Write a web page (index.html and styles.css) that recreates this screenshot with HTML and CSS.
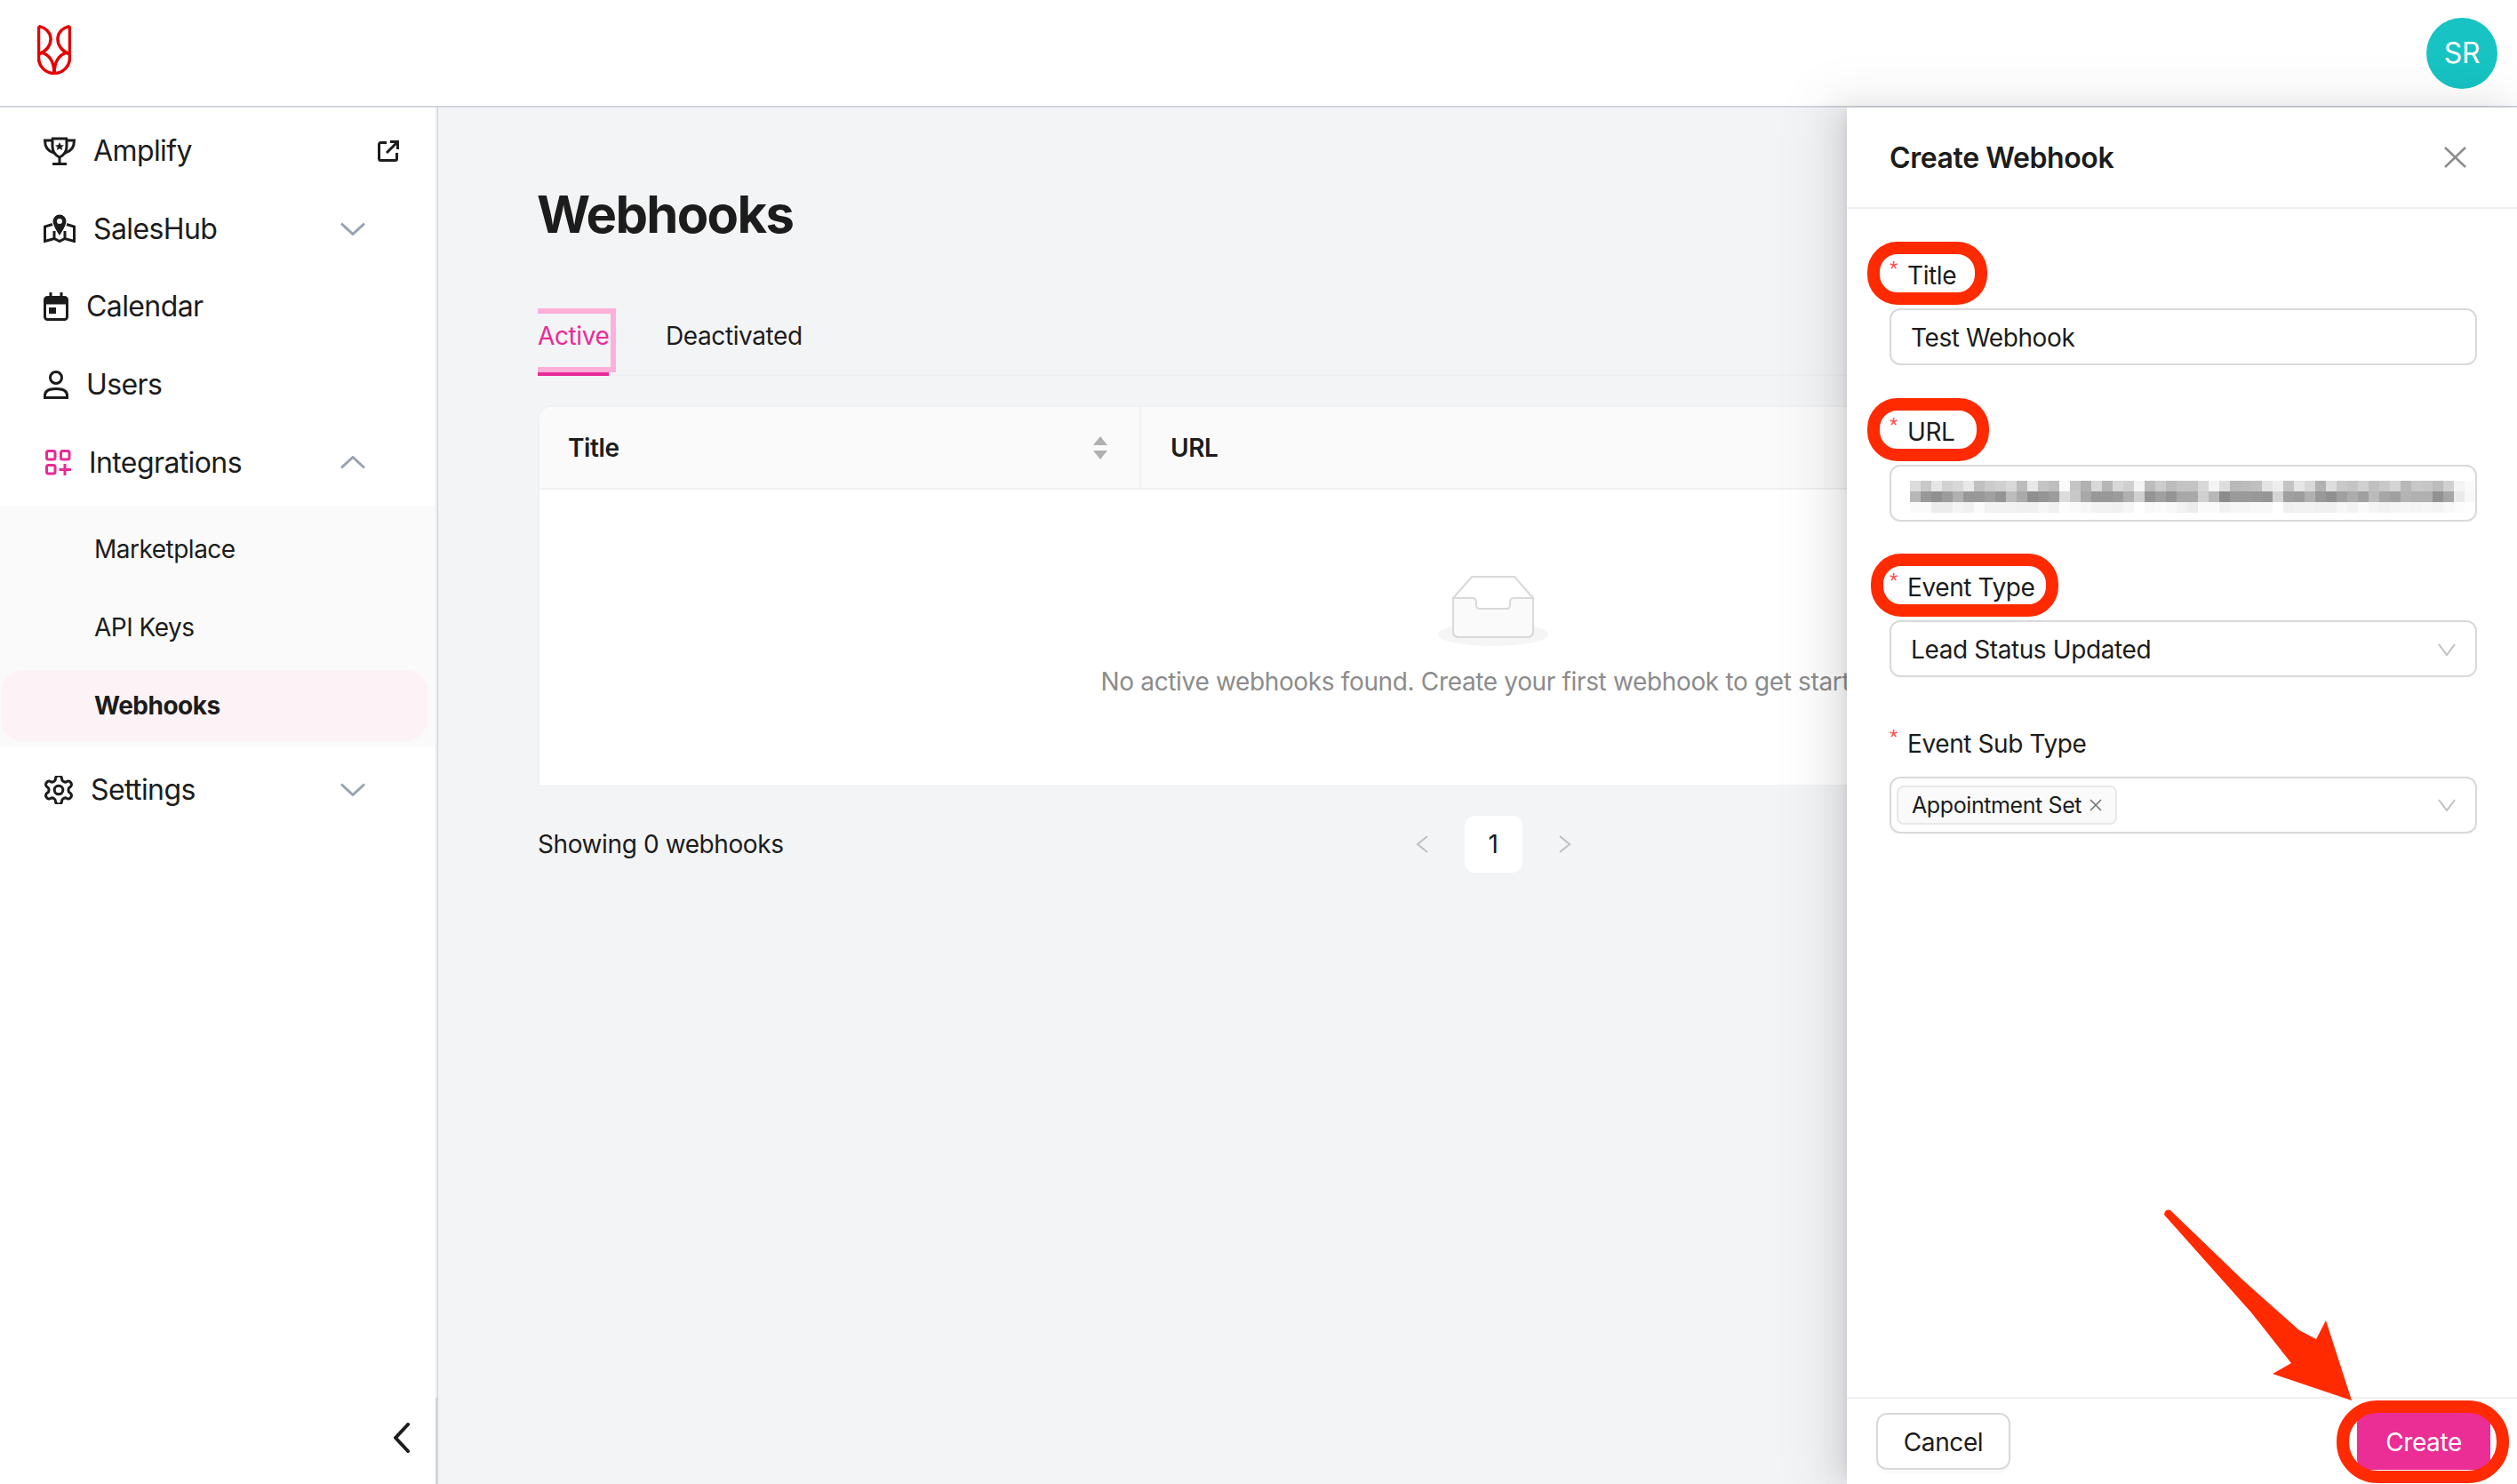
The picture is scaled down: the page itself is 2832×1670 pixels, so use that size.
FILE: index.html
```html
<!DOCTYPE html>
<html>
<head>
    <meta charset="utf-8">
    <title>Webhooks</title>
    <link rel="stylesheet" href="styles.css">
</head>
<body>
    <header class="topbar">
        <svg class="logo" width="38" height="56" viewBox="0 0 38 56" fill="none" stroke="#e60000" stroke-width="3.500">
            <path d="M1.500 1.500V37a17.500 17.500 0 0 0 35 0V1.500"/>
            <path d="M1.500 1.500C9 3 14.500 8 15 15c.5 8-5 15-13.500 18"/>
            <path d="M36.500 1.500C29 3 23.500 8 23 15c-.5 8 5 15 13.500 18"/>
            <path d="M4 31c9 2 15 10 15 24"/>
            <path d="M34 31c-9 2-15 10-15 24"/>
        </svg>
        <div class="avatar">SR</div>
    </header>

    <div class="layout">
        <aside class="sidebar">
            <nav class="nav">
                <a class="nav-row">
                    <svg width="36" height="32" viewBox="0 0 36 32" fill="none" stroke="#1c1c1c" stroke-width="3">
                        <path d="M9 2H27"/>
                        <path d="M10 2v9c0 6 4 10 8 12 4-2 8-6 8-12V2"/>
                        <path d="M10 4H1.500c0 7 3 12 10 14"/>
                        <path d="M26 4h8.500c0 7-3 12-10 14"/>
                        <path d="M18 23v7M10 30.500H26"/>
                        <path d="M18 6l1.500 3.200 3.500.3-2.700 2.200.9 3.400L18 13.300 14.800 15.100l.9-3.400L13 9.500l3.500-.3z" fill="#1c1c1c" stroke="none"/>
                    </svg>
                    <span>Amplify</span>
                    <svg class="row-end external" width="24" height="24" viewBox="0 0 24 24" fill="none" stroke="#1c1c1c" stroke-width="3">
                        <path d="M10 2.500H3.500a2 2 0 0 0-2 2v16a2 2 0 0 0 2 2h16a2 2 0 0 0 2-2V14"/>
                        <path d="M10 14L22 2M14 1.500h8.500V10"/>
                    </svg>
                </a>
                <a class="nav-row">
                    <svg width="36" height="32" viewBox="0 0 36 32" fill="none" stroke="#1c1c1c" stroke-width="3">
                        <path d="M10 11.500L1.500 14V30.500L12 27.500 18 30.500 24 27.500 34.500 30.500V14L26 11.500"/>
                        <path d="M12 19v8M24 19v8"/>
                        <path d="M18 .5a7.500 7.500 0 0 0-7.500 7.500C10.500 13 18 24 18 24s7.500-11 7.500-16A7.500 7.500 0 0 0 18 .5zm0 4.500a3 3 0 1 1 0 6 3 3 0 0 1 0-6z" fill="#1c1c1c" stroke="none"/>
                    </svg>
                    <span>SalesHub</span>
                    <svg class="row-end chevron" width="28" height="15" viewBox="0 0 28 15" fill="none" stroke="#98a2b3" stroke-width="3">
                        <path d="M1 1.500L14 13.500 27 1.500"/>
                    </svg>
                </a>
                <a class="nav-row">
                    <svg width="28" height="32" viewBox="0 0 28 32" fill="none" stroke="#1c1c1c" stroke-width="3">
                        <rect x="1.500" y="5.500" width="25" height="25" rx="3"/>
                        <path d="M1.500 9.500h25" stroke-width="8"/>
                        <path d="M8 0v6M20 0v6"/>
                        <rect x="6" y="17" width="8" height="7" fill="#1c1c1c" stroke="none"/>
                    </svg>
                    <span>Calendar</span>
                </a>
                <a class="nav-row">
                    <svg width="28" height="32" viewBox="0 0 28 32" fill="none" stroke="#1c1c1c" stroke-width="3">
                        <circle cx="14" cy="8" r="6.500"/>
                        <path d="M1.500 30.500V28c0-5 5-7.500 12.500-7.500S26.500 23 26.500 28v2.500z"/>
                    </svg>
                    <span>Users</span>
                </a>
                <a class="nav-row">
                    <svg class="icon-shift" width="29" height="29" viewBox="0 0 29 29" fill="none" stroke="#e92b96" stroke-width="3">
                        <rect x="1.500" y="1.500" width="9.500" height="9.500" rx="2"/>
                        <rect x="17.500" y="1.500" width="9.500" height="9.500" rx="2"/>
                        <rect x="1.500" y="17.500" width="9.500" height="9.500" rx="2"/>
                        <path d="M22 16v13M15.500 22.500H29"/>
                    </svg>
                    <span>Integrations</span>
                    <svg class="row-end chevron" width="28" height="15" viewBox="0 0 28 15" fill="none" stroke="#98a2b3" stroke-width="3">
                        <path d="M1 13.500L14 1.500 27 13.500"/>
                    </svg>
                </a>
                <div class="submenu">
                    <a class="sub-row">Marketplace</a>
                    <a class="sub-row">API Keys</a>
                    <a class="sub-row current">Webhooks</a>
                </div>
                <a class="nav-row settings">
                    <svg class="icon-shift-small" width="32" height="32" viewBox="2 2 20 20" fill="none" stroke="#1c1c1c" stroke-width="1.900">
                        <path d="M12.220 2h-.44a2 2 0 0 0-2 2v.18a2 2 0 0 1-1 1.730l-.43.25a2 2 0 0 1-2 0l-.15-.08a2 2 0 0 0-2.730.73l-.22.38a2 2 0 0 0 .73 2.730l.15.1a2 2 0 0 1 1 1.720v.51a2 2 0 0 1-1 1.740l-.15.09a2 2 0 0 0-.73 2.730l.22.38a2 2 0 0 0 2.730.73l.15-.08a2 2 0 0 1 2 0l.43.25a2 2 0 0 1 1 1.730V20a2 2 0 0 0 2 2h.44a2 2 0 0 0 2-2v-.18a2 2 0 0 1 1-1.730l.43-.25a2 2 0 0 1 2 0l.15.08a2 2 0 0 0 2.730-.73l.22-.39a2 2 0 0 0-.73-2.730l-.15-.08a2 2 0 0 1-1-1.740v-.5a2 2 0 0 1 1-1.740l.15-.09a2 2 0 0 0 .73-2.730l-.22-.38a2 2 0 0 0-2.730-.73l-.15.08a2 2 0 0 1-2 0l-.43-.25a2 2 0 0 1-1-1.730V4a2 2 0 0 0-2-2z"/>
                        <circle cx="12" cy="12" r="3"/>
                    </svg>
                    <span>Settings</span>
                    <svg class="row-end chevron" width="28" height="15" viewBox="0 0 28 15" fill="none" stroke="#98a2b3" stroke-width="3">
                        <path d="M1 1.500L14 13.500 27 1.500"/>
                    </svg>
                </a>
            </nav>
            <div class="collapse">
                <svg width="18" height="34" viewBox="0 0 18 34" fill="none" stroke="#1c1c1c" stroke-width="4" stroke-linecap="round">
                    <path d="M16 2L2 17 16 32"/>
                </svg>
            </div>
        </aside>

        <main class="main">
            <h1 class="page-title">Webhooks</h1>

            <div class="tabs">
                <div class="tab active">Active</div>
                <div class="tab">Deactivated</div>
            </div>

            <div class="table">
                <div class="table-head">
                    <div class="col-title">
                        <span>Title</span>
                        <svg width="16" height="26" viewBox="0 0 16 26" fill="#b0b0b0">
                            <path d="M8 0l8 10H0z"/>
                            <path d="M0 16h16l-8 10z"/>
                        </svg>
                    </div>
                    <div class="col-url">URL</div>
                </div>
                <div class="empty">
                    <svg width="124" height="79" viewBox="0 0 124 79">
                        <ellipse cx="62" cy="66" rx="62" ry="13" fill="#f5f5f5"/>
                        <path d="M17 25L38 1H86L107 25V63a6 6 0 0 1-6 6H23a6 6 0 0 1-6-6z" fill="#fff" stroke="#d9d9d9" stroke-width="2"/>
                        <path d="M17 25H39c3 0 4 2 4 5v3c0 3 1 4 4 4H77c3 0 4-1 4-4v-3c0-3 1-5 4-5H107V63a6 6 0 0 1-6 6H23a6 6 0 0 1-6-6z" fill="#fafafa" stroke="#d9d9d9" stroke-width="2"/>
                    </svg>
                    <p>No active webhooks found. Create your first webhook to get started.</p>
                </div>
            </div>

            <div class="table-foot">
                <div class="showing">Showing 0 webhooks</div>
                <div class="pager">
                    <svg width="14" height="20" viewBox="0 0 14 20" fill="none" stroke="#bfbfbf" stroke-width="2">
                        <path d="M13 1L2 10 13 19"/>
                    </svg>
                    <span class="page-num">1</span>
                    <svg width="14" height="20" viewBox="0 0 14 20" fill="none" stroke="#bfbfbf" stroke-width="2">
                        <path d="M1 1L12 10 1 19"/>
                    </svg>
                </div>
                <div></div>
            </div>
        </main>
    </div>

    <!-- 右侧抽屉 -->
    <section class="drawer">
        <div class="drawer-head">
            <span class="drawer-title">Create Webhook</span>
            <svg width="25" height="24" viewBox="0 0 25 24" fill="none" stroke="#8c8c8c" stroke-width="2.500">
                <path d="M1 1L24 23M24 1L1 23"/>
            </svg>
        </div>

        <div class="drawer-body">
            <div class="field">
                <label class="field-label ring ring-title"><i>*</i>Title</label>
                <div class="input">Test Webhook</div>
            </div>
            <div class="field">
                <label class="field-label ring ring-url"><i>*</i>URL</label>
                <div class="input">
                    <div class="blurred">
                        <div class="blur-row one"></div>
                        <div class="blur-row two"></div>
                        <div class="blur-row three"></div>
                    </div>
                </div>
            </div>
            <div class="field">
                <label class="field-label ring ring-event"><i>*</i>Event Type</label>
                <div class="input select">
                    <span>Lead Status Updated</span>
                    <svg width="20" height="14" viewBox="0 0 20 14" fill="none" stroke="#bfbfbf" stroke-width="2">
                        <path d="M1 1L10 13 19 1"/>
                    </svg>
                </div>
            </div>
            <div class="field">
                <label class="field-label"><i>*</i>Event Sub Type</label>
                <div class="input select multi">
                    <span class="tag">Appointment Set
                        <svg width="14" height="14" viewBox="0 0 14 14" fill="none" stroke="#6e6e6e" stroke-width="1.500">
                            <path d="M1 1L13 13M13 1L1 13"/>
                        </svg>
                    </span>
                    <svg width="20" height="14" viewBox="0 0 20 14" fill="none" stroke="#bfbfbf" stroke-width="2">
                        <path d="M1 1L10 13 19 1"/>
                    </svg>
                </div>
            </div>
        </div>

        <div class="drawer-foot">
            <button class="btn">Cancel</button>
            <button class="btn primary">Create</button>
        </div>

        <!-- 红色箭头标注 -->
        <svg class="arrow" width="220" height="225" viewBox="0 0 220 225" fill="#ff2a00">
            <path d="M5 12Q6 5 12 7L93 85 157 142 176 152 187 131 216 221 127 191 148 179 103 122z"/>
        </svg>
    </section>
</body>
</html>
```

FILE: styles.css
```css
*{
    box-sizing:border-box;
    margin:0;
    padding:0;
}

body{
    width:2832px;
    height:1670px;
    overflow:hidden;
    position:relative;
    font-family:Inter,"Liberation Sans",sans-serif;
    font-size:28px;
    letter-spacing:-.4px;
    color:#1c1c1c;
    background-color:#fff;
}

/*顶栏*/
.topbar{
    height:121px;
    display:flex;
    align-items:center;
    justify-content:space-between;
    padding:0 22px 0 42px;
    border-bottom:2px solid #d0d5dd;
    background-color:#fff;
}

.logo{
    margin-top:-7px;
}

.avatar{
    width:80px;
    height:80px;
    border-radius:50%;
    display:flex;
    align-items:center;
    justify-content:center;
    font-size:32px;
    color:#fff;
    background-color:#17c3c3;
}

.layout{
    display:flex;
    height:1549px;
}

/*左侧菜单*/
.sidebar{
    width:493px;
    flex-shrink:0;
    display:flex;
    flex-direction:column;
    border-right:3px solid #d0d5dd;
}

.nav{
    flex:1;
    padding-top:5px;
    border-right:2px solid #eeeeee;
    margin-right:-2px;
}

.nav-row{
    height:87.6px;
    display:flex;
    align-items:center;
    gap:20px;
    padding-left:49px;
    font-size:32px;
    letter-spacing:-.6px;
}

.row-end{
    margin-left:auto;
}

.chevron{
    margin-right:79px;
}

.external{
    margin-right:41px;
}

.icon-shift{
    margin-left:2px;
}

.icon-shift-small{
    margin-left:1px;
}

.submenu{
    margin-top:5px;
    padding-top:9px;
    height:272px;
    background-color:#fafafa;
}

.sub-row{
    height:80px;
    margin-bottom:8px;
    display:flex;
    align-items:center;
    padding-left:105px;
    margin-right:9px;
    margin-left:1px;
    border-radius:24px;
    font-size:28px;
    letter-spacing:-.5px;
}

.current{
    font-weight:700;
    background-color:#fdf2f6;
}

.settings{
    margin-top:4px;
}

.collapse{
    height:97px;
    display:flex;
    align-items:center;
    justify-content:flex-end;
    padding:0 29px 7px 0;
}

/*主区域*/
.main{
    flex:1;
    min-width:0;
    padding:84px 77px 0 112px;
    background-color:#f3f4f6;
}

.page-title{
    margin-left:-1px;
    font-size:58px;
    line-height:72px;
    font-weight:700;
    letter-spacing:-1.700px;
}

.tabs{
    margin-top:56px;
    height:90px;
    display:flex;
    gap:64px;
    border-bottom:2px solid #eeeff1;
}

.tab{
    position:relative;
    height:90px;
    line-height:90px;
}

.tab.active{
    width:80px;
    color:#e92b96;
    border-bottom:4px solid #e92b96;
}

/*Active外面的粉色方框*/
.tab.active::before{
    content:"";
    position:absolute;
    left:0;
    right:-8px;
    top:14px;
    height:60px;
    border:6px solid #ffb0d8;
    border-left:none;
}

.table{
    margin-top:33px;
    border:2px solid #f0f1f3;
    border-bottom:none;
    border-radius:16px 16px 0 0;
    background-color:#fff;
    overflow:hidden;
}

.table-head{
    height:93px;
    display:flex;
    border-bottom:2px solid #f0f0f0;
    background-color:#fafafa;
    font-weight:600;
}

.col-title{
    width:677px;
    display:flex;
    align-items:center;
    justify-content:space-between;
    padding:0 36px 0 32px;
    border-right:2px solid #f0f0f0;
}

.col-url{
    flex:1;
    display:flex;
    align-items:center;
    padding-left:33px;
}

.empty{
    height:332px;
    padding-top:97px;
    display:flex;
    flex-direction:column;
    align-items:center;
    color:#8c8c8c;
}

.empty p{
    margin-top:20px;
    line-height:40px;
    letter-spacing:-.35px;
    white-space:nowrap;
}

.table-foot{
    margin-top:35px;
    display:grid;
    grid-template-columns:1fr auto 1fr;
    align-items:center;
}

.pager{
    display:flex;
    align-items:center;
    gap:41px;
}

.page-num{
    width:65px;
    height:64px;
    line-height:64px;
    text-align:center;
    border-radius:12px;
    background-color:#fff;
}

/*右侧抽屉，盖在页面之上*/
.drawer{
    position:absolute;
    top:121px;
    right:0;
    bottom:0;
    width:754px;
    display:flex;
    flex-direction:column;
    background-color:#fff;
    box-shadow:-12px 0 32px 0 rgba(0,0,0,.08),-6px 0 12px -8px rgba(0,0,0,.12),-18px 0 56px 16px rgba(0,0,0,.05);
}

.drawer-head{
    height:114px;
    display:flex;
    align-items:center;
    justify-content:space-between;
    padding:0 57px 0 48px;
    border-bottom:2px solid #f0f0f0;
}

.drawer-title{
    font-size:32px;
    font-weight:600;
}

.drawer-body{
    flex:1;
    padding:53px 45px 0 48px;
}

.field{
    height:175.5px;
    display:flex;
    flex-direction:column;
    align-items:stretch;
}

.field-label{
    position:relative;
    display:flex;
    align-self:flex-start;
    height:44px;
    line-height:44px;
    margin-bottom:15px;
}

.field-label i{
    width:20px;
    font:normal 24px/30px "Liberation Sans",sans-serif;
    color:#ff4d4f;
}

/*标签外面的红色圈*/
.ring::after{
    content:"";
    position:absolute;
    top:-16px;
    bottom:-11px;
    border:14px solid #ff2a00;
    border-radius:34px;
}

.ring-title::after{
    left:-25px;
    right:-35px;
}

.ring-url::after{
    left:-25px;
    right:-38px;
}

.ring-event::after{
    left:-21px;
    right:-27px;
}

.input{
    height:64px;
    flex-shrink:0;
    display:flex;
    align-items:center;
    padding:2px 22px 0;
    border:2px solid #d9d9d9;
    border-radius:12px;
    background-color:#fff;
}

.select{
    justify-content:space-between;
}

.multi{
    padding:0 22px 0 6px;
}

.tag{
    height:44px;
    display:flex;
    align-items:center;
    gap:9px;
    padding:0 15px;
    border:2px solid #e8e8e8;
    border-radius:8px;
    font-size:25px;
    background-color:#fafafa;
}

/*打码的URL*/
.blurred{
    margin-top:6px;
    margin-left:-1px;
}

.blur-row{
    width:636px;
    height:12px;
}

.blur-row.one{
    background:linear-gradient(90deg,#dcdcdc 0 12px,#c8c8c8 0 24px,#e6e6e6 0 36px,#d2d2d2 0 48px,#d8d8d8 0 60px,#e8e8e8 0 72px,#c0c0c0 0 84px,#cbcbcb 0 96px,#d0d0d0 0 108px,#d8d8d8 0 120px,#bcbcbc 0 132px,#e8e8e8 0 144px,#c4c4c4 0 156px,#bebebe 0 168px,#fafafa 0 180px,#c4c4c4 0 192px,#b2b2b2 0 204px,#d8d8d8 0 216px,#b6b6b6 0 228px,#d8d8d8 0 240px,#d0d0d0 0 252px,#f4f4f4 0 264px,#bcbcbc 0 276px,#cccccc 0 288px,#bcbcbc 0 300px,#c4c4c4 0 312px,#c4c4c4 0 324px,#d8d8d8 0 336px,#f4f4f4 0 348px,#dedede 0 360px,#b8b8b8 0 372px,#bcbcbc 0 384px,#c0c0c0 0 396px,#e4e4e4 0 408px,#eeeeee 0 420px,#c4c4c4 0 432px,#e6e6e6 0 444px,#d8d8d8 0 456px,#b2b2b2 0 468px,#dedede 0 480px,#c8c8c8 0 492px,#c4c4c4 0 504px,#d0d0d0 0 516px,#c0c0c0 0 528px,#c8c8c8 0 540px,#d4d4d4 0 552px,#b8b8b8 0 564px,#c8c8c8 0 576px,#c6c6c6 0 588px,#bcbcbc 0 600px,#d0d0d0 0 612px,#f4f4f4 0 624px,#fafafa 0 636px);
}

.blur-row.two{
    background:linear-gradient(90deg,#b8b8b8 0 12px,#989898 0 24px,#909090 0 36px,#9c9c9c 0 48px,#b0b0b0 0 60px,#989898 0 72px,#989898 0 84px,#a0a0a0 0 96px,#949494 0 108px,#bcbcbc 0 120px,#aaaaaa 0 132px,#909090 0 144px,#949494 0 156px,#9c9c9c 0 168px,#dcdcdc 0 180px,#c8c8c8 0 192px,#a8a8a8 0 204px,#989898 0 216px,#989898 0 228px,#9c9c9c 0 240px,#b0b0b0 0 252px,#d0d0d0 0 264px,#949494 0 276px,#a0a0a0 0 288px,#949494 0 300px,#a8a8a8 0 312px,#a8a8a8 0 324px,#d0d0d0 0 336px,#b8b8b8 0 348px,#8c8c8c 0 360px,#9a9a9a 0 372px,#9a9a9a 0 384px,#989898 0 396px,#969696 0 408px,#d4d4d4 0 420px,#a0a0a0 0 432px,#9c9c9c 0 444px,#b0b0b0 0 456px,#989898 0 468px,#909090 0 480px,#a0a0a0 0 492px,#acacac 0 504px,#a0a0a0 0 516px,#bbbbbb 0 528px,#a6a6a6 0 540px,#a0a0a0 0 552px,#b4b4b4 0 564px,#b0b0b0 0 576px,#b0b0b0 0 588px,#929292 0 600px,#a6a6a6 0 612px,#eaeaea 0 624px,#f8f8f8 0 636px);
}

.blur-row.three{
    background:linear-gradient(90deg,#fafafa 0 24px,#ececec 0 48px,#f4f4f4 0 60px,#f0f0f0 0 72px,#fbfbfb 0 84px,#f2f2f2 0 120px,#f0f0f0 0 144px,#f6f6f6 0 156px,#f0f0f0 0 168px,#fdfdfd 0 180px,#fafafa 0 192px,#f6f6f6 0 204px,#f2f2f2 0 228px,#f0f0f0 0 240px,#f6f6f6 0 252px,#ffffff 0 264px,#f8f8f8 0 276px,#fafafa 0 288px,#f8f8f8 0 300px,#f2f2f2 0 312px,#ececec 0 324px,#fafafa 0 348px,#f2f2f2 0 360px,#f6f6f6 0 384px,#f8f8f8 0 408px,#ffffff 0 420px,#f0f0f0 0 432px,#f2f2f2 0 456px,#f0f0f0 0 480px,#f6f6f6 0 492px,#f2f2f2 0 504px,#fafafa 0 516px,#f4f4f4 0 528px,#f2f2f2 0 540px,#f4f4f4 0 552px,#f6f6f6 0 564px,#f4f4f4 0 576px,#f6f6f6 0 588px,#f4f4f4 0 600px,#f8f8f8 0 612px,#fcfcfc 0 624px,#fefefe 0 636px);
}

.drawer-foot{
    height:98px;
    display:flex;
    align-items:flex-start;
    justify-content:space-between;
    padding:16px 30px 0 33px;
    border-top:2px solid #f0f0f0;
}

.btn{
    position:relative;
    width:151px;
    height:64px;
    padding-top:2px;
    font:inherit;
    letter-spacing:inherit;
    color:#1c1c1c;
    border:2px solid #d9d9d9;
    border-radius:12px;
    background-color:#fff;
    box-shadow:0 4px 0 rgba(0,0,0,.02);
}

.btn.primary{
    width:150px;
    color:#fff;
    border:none;
    background-color:#eb2d96;
    box-shadow:none;
}

.btn.primary::after{
    content:"";
    position:absolute;
    top:-14px;
    bottom:-15px;
    left:-23px;
    right:-21px;
    border:14px solid #ff2a00;
    border-radius:46px;
}

.arrow{
    position:absolute;
    left:352px;
    top:1234px;
}
```
